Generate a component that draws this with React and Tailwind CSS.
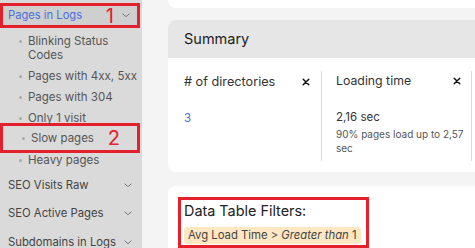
import React from "react";

const Chevron = ({ className = "" }) => (
  <svg viewBox="0 0 10 6" className={className} width="8" height="5" fill="none">
    <path d="M1 1l4 3.5L9 1" stroke="#777" strokeWidth="1.2" strokeLinecap="round" strokeLinejoin="round" />
  </svg>
);

const Cross = () => (
  <svg viewBox="0 0 10 10" width="8" height="8">
    <path d="M1.5 1.5l7 7M8.5 1.5l-7 7" stroke="#111" strokeWidth="1.8" strokeLinecap="round" />
  </svg>
);

const Sub = ({ children, className = "" }) => (
  <div className={"flex items-start pl-[19px] text-[11.5px] leading-[14px] text-[#555] " + className}>
    <span className="mt-[6px] mr-[6px] h-[3px] w-[3px] shrink-0 rounded-full bg-[#aaa]" />
    <span>{children}</span>
  </div>
);

const Section = ({ children, className = "" }) => (
  <div className={"flex h-[28.5px] items-center justify-between pl-[8px] pr-[10px] text-[11.3px] text-[#444] " + className}>
    <span className="whitespace-nowrap">{children}</span>
    <Chevron />
  </div>
);

export default function App() {
  return (
    <div
      className="flex h-[248px] w-[475px] overflow-hidden bg-[#f4f4f4]"
      style={{ fontFamily: "Inter, 'Noto Sans', sans-serif" }}
    >
      <aside className="w-[142px] shrink-0 bg-[#dadada] pt-[3px]">
        <div className="flex h-[25px] w-[140px] items-center border-[3px] border-[#e3202b] bg-[#cfcfcf] pl-[5px] pr-[7px]">
          <span className="text-[11.2px] text-[#4a6fe0]">Pages in Logs</span>
          <span className="ml-auto mr-[8px] text-[20px] leading-none text-[#e3202b]">1</span>
          <Chevron />
        </div>
        <div className="pt-[6px]">
          <Sub className="w-[118px]">Blinking Status Codes</Sub>
          <Sub className="mt-[7px]">Pages with 4xx, 5xx</Sub>
          <Sub className="mt-[7px]">Pages with 304</Sub>
          <Sub className="mt-[7px]">Only 1 visit</Sub>
          <div className="mt-[-2px] flex h-[30px] w-[140px] items-center border-[3px] border-[#e3202b]">
            <Sub className="pl-[16px]">Slow pages</Sub>
            <span className="ml-auto mr-[17px] text-[20px] leading-none text-[#e3202b]">2</span>
          </div>
          <Sub className="mt-[0px]">Heavy pages</Sub>
        </div>
        <Section className="mt-[4px]">SEO Visits Raw</Section>
        <Section>SEO Active Pages</Section>
        <Section>Subdomains in Logs</Section>
      </aside>

      <main className="min-w-0 flex-1 pl-[26px]">
        <div className="h-[8px] w-[400px] rounded-b-lg bg-white" />
        <div className="mt-[12px] w-[400px] overflow-hidden rounded-lg bg-white">
          <div className="flex h-[38px] items-center bg-[#e6e6e6] px-[16px] text-[14.5px] text-[#222]">
            Summary
          </div>
          <div className="flex pb-[11px] pt-[13px]">
            <div className="flex h-[90px] w-[154px] flex-col border-r border-[#dadada] pl-[16px] pr-[11px]">
              <div className="flex items-center justify-between pt-[1px] text-[12.7px] text-[#333]">
                <span># of directories</span>
                <Cross />
              </div>
              <div className="mt-[19px] text-[11.5px] text-[#4a6fe0]">3</div>
            </div>
            <div className="flex h-[90px] w-[150px] flex-col border-r border-[#dadada] pl-[14px]">
              <div className="flex items-center justify-between pr-[10px] pt-[1px] text-[12.3px] text-[#333]">
                <span>Loading time</span>
                <Cross />
              </div>
              <div className="mt-[19px] text-[11.5px] text-[#333]">2,16 sec</div>
              <div className="w-[132px] text-[10px] leading-[14px] text-[#555]">
                90% pages load up to 2,57 sec
              </div>
            </div>
          </div>
        </div>
        <div className="mt-[14px] h-[80px] w-[400px] rounded-lg bg-white pl-[10px] pt-[11px]">
          <div className="h-[51px] w-[191px] border-[3px] border-[#e3202b] pl-[3px] pt-[1px]">
            <div className="text-[14.4px] leading-[20px] text-[#222]">Data Table Filters:</div>
            <div className="mt-[1px] inline-block whitespace-nowrap rounded-[3px] bg-[#fde8c3] px-[4px] py-[1px] text-[11.3px] leading-[15px] text-[#444]">
              Avg Load Time &gt; <i>Greater than</i> 1
            </div>
          </div>
        </div>
      </main>
    </div>
  );
}
